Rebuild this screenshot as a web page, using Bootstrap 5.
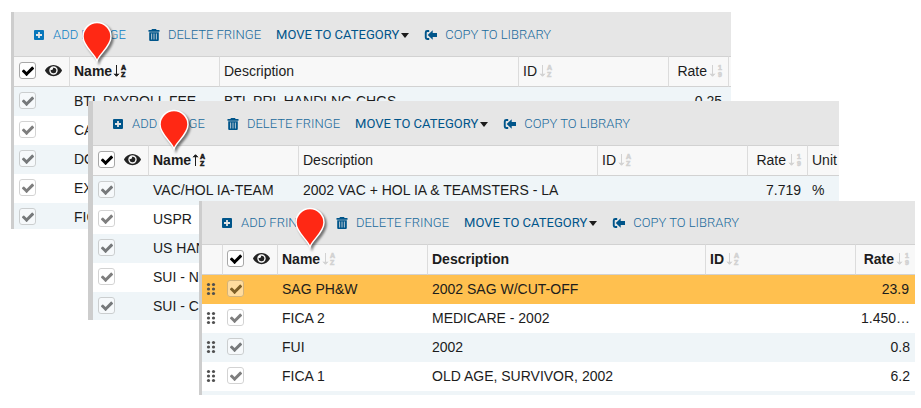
<!DOCTYPE html>
<html lang="en">
<head>
<meta charset="utf-8">
<meta name="viewport" content="width=device-width, initial-scale=1">
<title>Fringes</title>
<link rel="stylesheet" href="https://cdn.jsdelivr.net/npm/bootstrap@5.3.0/dist/css/bootstrap.min.css">
<style>
body{background:#fff;color:#1c1c1c;font:14px/20px "Liberation Sans",Arial,sans-serif;min-height:408px}
.win{background:#fff;border-left:3px solid #cdcdcd}
.win-a{left:11px;right:190px;top:12px;max-height:217px}
.win-b{left:88px;right:82px;top:101px;max-height:219px;border-left-width:5px}
.win-c{left:199px;right:6px;top:201px;max-height:194px}
.tools{height:44px;padding:2px 0 0 18px;background:#e6e6e6}
.win-c .tools{height:43px;padding-top:1px}
.tools .btn{--bs-btn-color:#1a6a9c;--bs-btn-hover-color:#00558a;font:300 13px/20px Roboto,sans-serif;border:0;gap:7px;margin-right:15px}
.tools .btn.add{margin-right:21px}
.tools .btn.move{--bs-btn-color:#00558a;font-weight:400;gap:2px}
.win-a .btn.add{--bs-btn-color:#0d80c4}
.move::after{content:"";border:4px solid transparent;border-top:5px solid #1c1c1c;border-bottom:0}
.glyph{width:14px;height:14px;fill:#00558a;flex:none}
.win-a .add .glyph{fill:#0877bb}
.grid{table-layout:fixed;width:100%;border-collapse:separate;border-spacing:0}
.grid th,.grid td{padding:0 5px 2px;white-space:nowrap}
.grid td{height:29px;overflow:hidden;text-overflow:ellipsis}
.grid th{height:31px;background:#f8f8f8;border-top:1px solid #d2d2d2;border-bottom:1px solid #d2d2d2;font-weight:400}
.grid th+th{border-left:1px solid #dcdcdc;padding-left:4px}
.grid th.strong{font-weight:700}
.stripe{background:#eff5f8}
.picked{background:#ffc04f}
.c-drag{width:20px}.c-check{width:55px}.c-name,.c-id{width:150px}.c-rate{width:60px}.c-edge{width:3px}.c-unit{width:32px}
.grid th.edge{padding:0}
.grid td.num{padding-right:6px}
.pick{gap:9px}
.tick.form-check-input{width:17px;height:17px;margin:0;border:1px solid #a8a8a8;border-radius:3px;background-color:#fff;float:none;flex:none;display:block}
.tick.form-check-input:checked{background-color:#fff;border-color:#a8a8a8;background-size:14px 14px;background-image:url("data:image/svg+xml,%3Csvg xmlns='http://www.w3.org/2000/svg' viewBox='0 0 1792 1792'%3E%3Cpath d='M1671 566q0 40-28 68l-724 724-136 136q-28 28-68 28t-68-28l-136-136-362-362q-28-28-28-68t28-68l136-136q28-28 68-28t68 28l294 295 656-657q28-28 68-28t68 28l136 136q28 28 28 68z'/%3E%3C/svg%3E")}
.grid td .tick.form-check-input{opacity:.5}
.grid td .tick.form-check-input:checked{background-color:rgba(255,255,255,.9)}
.eye{width:17px;height:15px;fill:#222}
.sort{width:14px;height:14px;margin-left:2px;fill:#d2d2d2;stroke:#d2d2d2}
.sort.on{margin-left:1px;fill:#1c1c1c;stroke:#1c1c1c}
.sort text{font:700 7px "Liberation Sans",Arial,sans-serif;stroke-width:.6}
.sort path{fill:none;stroke-width:1.7}
.dots{width:10px;height:14px;margin-left:-1px;fill:#505050;display:block}
.pin{width:38px;height:48px;filter:drop-shadow(2px 2px 1px rgba(0,0,0,.5))}
.win-a .pin{left:64px;top:6px}
.win-b .pin{left:62px;top:5px}
.win-c .pin{left:89px;top:3px}
</style>
<script src="https://cdn.jsdelivr.net/npm/bootstrap@5.3.0/dist/js/bootstrap.bundle.min.js"></script>
</head>
<body class="position-relative overflow-hidden">
<svg class="d-none" aria-hidden="true">
<symbol id="plus" viewBox="0 0 14 14"><path fill-rule="evenodd" d="M3 2h8a1 1 0 0 1 1 1v8a1 1 0 0 1-1 1H3a1 1 0 0 1-1-1V3a1 1 0 0 1 1-1zM6.1 4v2.1H4v1.8h2.1V10h1.8V7.900H10V6.100H7.900V4z"/></symbol>
<symbol id="trash" viewBox="0 0 14 14"><path fill-rule="evenodd" d="M5 1h4l.6 1H12.500v1.700h-11V2h2.900zM2.200 4.200h9.600V12a1 1 0 0 1-1 1H3.200a1 1 0 0 1-1-1zM4.300 5.500v6h.8v-6zM6.600 5.500v6h.8v-6zM8.900 5.500v6h.8v-6z"/></symbol>
<symbol id="export" viewBox="0 0 14 14"><path d="M5.200 2H3.200A2.400 2.400 0 0 0 .8 4.400v5.200A2.400 2.400 0 0 0 3.200 12h2v-1.900H3.500a.8.8 0 0 1-.8-.8V4.700a.8.8 0 0 1 .8-.8h1.700zM3.700 7l5-4.800v2.900H13v3.800H8.700v2.900z"/></symbol>
<symbol id="eye" viewBox="0 0 576 512"><path d="M572.520 241.400C518.290 135.590 410.930 64 288 64S57.680 135.640 3.480 241.410a32.350 32.350 0 0 0 0 29.190C57.710 376.410 165.070 448 288 448s230.320-71.640 284.520-177.410a32.350 32.350 0 0 0 0-29.190zM288 400a144 144 0 1 1 144-144 143.930 143.930 0 0 1-144 144zm0-240a95.310 95.310 0 0 0-25.180 3.790 47.850 47.850 0 0 1-66.900 66.900A95.780 95.780 0 1 0 288 160z"/></symbol>
<symbol id="down" viewBox="0 0 14 14"><path d="M3.500 1v11M1 9.800l2.500 2.500L6 9.800"/></symbol>
<symbol id="up" viewBox="0 0 14 14"><path d="M3.500 13V2M1 4.200l2.500-2.500L6 4.200"/></symbol>
<symbol id="dots" viewBox="0 0 10 14"><circle cx="2.500" cy="2.500" r="1.600"/><circle cx="7.500" cy="2.500" r="1.600"/><circle cx="2.500" cy="7" r="1.600"/><circle cx="7.500" cy="7" r="1.600"/><circle cx="2.500" cy="11.500" r="1.600"/><circle cx="7.500" cy="11.500" r="1.600"/></symbol>
<symbol id="pin" viewBox="0 0 38 48"><path d="M19 43C17 36 5 28.500 5 18.500a14 14 0 0 1 28 0C33 28.500 21 36 19 43z" fill="#ff2814" stroke="#fff" stroke-width="1.500"/></symbol>
</svg>

<section class="win win-a position-absolute overflow-hidden" aria-label="Sorted by name, ascending">
<div class="tools d-flex align-items-center text-nowrap">
<button type="button" class="btn add p-0 d-flex align-items-center"><svg class="glyph"><use href="#plus"/></svg>ADD FRINGE</button>
<button type="button" class="btn p-0 d-flex align-items-center"><svg class="glyph"><use href="#trash"/></svg>DELETE FRINGE</button>
<button type="button" class="btn move p-0 d-flex align-items-center">MOVE TO CATEGORY</button>
<button type="button" class="btn p-0 d-flex align-items-center"><svg class="glyph"><use href="#export"/></svg>COPY TO LIBRARY</button>
</div>
<table class="grid">
<colgroup><col class="c-check"><col class="c-name"><col><col class="c-id"><col class="c-rate"><col class="c-edge"></colgroup>
<thead><tr>
<th><div class="pick d-flex align-items-center"><input class="tick form-check-input" type="checkbox" checked aria-label="Select all"><svg class="eye"><use href="#eye"/></svg></div></th>
<th class="strong"><div class="d-flex align-items-center">Name<svg class="sort on"><use href="#down"/><text x="8" y="6">A</text><text x="8" y="13">Z</text></svg></div></th>
<th>Description</th>
<th><div class="d-flex align-items-center">ID<svg class="sort"><use href="#down"/><text x="8" y="6">A</text><text x="8" y="13">Z</text></svg></div></th>
<th><div class="d-flex align-items-center justify-content-end">Rate<svg class="sort"><use href="#down"/><text x="9" y="6">1</text><text x="9" y="13">9</text></svg></div></th>
<th class="edge"></th>
</tr></thead>
<tbody>
<tr class="stripe"><td><input class="tick form-check-input" type="checkbox" checked aria-label="Select BTL PAYROLL FEE"></td><td>BTL PAYROLL FEE</td><td>BTL PRL HANDLNG CHGS</td><td></td><td class="num text-end">0.25</td><td></td></tr>
<tr><td><input class="tick form-check-input" type="checkbox" checked aria-label="Select CA"></td><td>CA</td><td></td><td></td><td></td><td></td></tr>
<tr class="stripe"><td><input class="tick form-check-input" type="checkbox" checked aria-label="Select DO"></td><td>DO</td><td></td><td></td><td></td><td></td></tr>
<tr><td><input class="tick form-check-input" type="checkbox" checked aria-label="Select EX"></td><td>EX</td><td></td><td></td><td></td><td></td></tr>
<tr class="stripe"><td><input class="tick form-check-input" type="checkbox" checked aria-label="Select FIC"></td><td>FIC</td><td></td><td></td><td></td><td></td></tr>
</tbody></table>
<svg class="pin position-absolute"><use href="#pin"/></svg>
</section>

<section class="win win-b position-absolute overflow-hidden" aria-label="Sorted by name, descending">
<div class="tools d-flex align-items-center text-nowrap">
<button type="button" class="btn add p-0 d-flex align-items-center"><svg class="glyph"><use href="#plus"/></svg>ADD FRINGE</button>
<button type="button" class="btn p-0 d-flex align-items-center"><svg class="glyph"><use href="#trash"/></svg>DELETE FRINGE</button>
<button type="button" class="btn move p-0 d-flex align-items-center">MOVE TO CATEGORY</button>
<button type="button" class="btn p-0 d-flex align-items-center"><svg class="glyph"><use href="#export"/></svg>COPY TO LIBRARY</button>
</div>
<table class="grid">
<colgroup><col class="c-check"><col class="c-name"><col><col class="c-id"><col class="c-rate"><col class="c-unit"></colgroup>
<thead><tr>
<th><div class="pick d-flex align-items-center"><input class="tick form-check-input" type="checkbox" checked aria-label="Select all"><svg class="eye"><use href="#eye"/></svg></div></th>
<th class="strong"><div class="d-flex align-items-center">Name<svg class="sort on"><use href="#up"/><text x="8" y="6">A</text><text x="8" y="13">Z</text></svg></div></th>
<th>Description</th>
<th><div class="d-flex align-items-center">ID<svg class="sort"><use href="#down"/><text x="8" y="6">A</text><text x="8" y="13">Z</text></svg></div></th>
<th><div class="d-flex align-items-center justify-content-end">Rate<svg class="sort"><use href="#down"/><text x="9" y="6">1</text><text x="9" y="13">9</text></svg></div></th>
<th>Unit</th>
</tr></thead>
<tbody>
<tr class="stripe"><td><input class="tick form-check-input" type="checkbox" checked aria-label="Select VAC/HOL IA-TEAM"></td><td>VAC/HOL IA-TEAM</td><td>2002 VAC + HOL IA &amp; TEAMSTERS - LA</td><td></td><td class="num text-end">7.719</td><td>%</td></tr>
<tr><td><input class="tick form-check-input" type="checkbox" checked aria-label="Select USPR"></td><td>USPR</td><td></td><td></td><td></td><td></td></tr>
<tr class="stripe"><td><input class="tick form-check-input" type="checkbox" checked aria-label="Select US HAN"></td><td>US HAN</td><td></td><td></td><td></td><td></td></tr>
<tr><td><input class="tick form-check-input" type="checkbox" checked aria-label="Select SUI - N"></td><td>SUI - N</td><td></td><td></td><td></td><td></td></tr>
<tr class="stripe"><td><input class="tick form-check-input" type="checkbox" checked aria-label="Select SUI - C"></td><td>SUI - C</td><td></td><td></td><td></td><td></td></tr>
</tbody></table>
<svg class="pin position-absolute"><use href="#pin"/></svg>
</section>

<section class="win win-c position-absolute overflow-hidden" aria-label="Custom order">
<div class="tools d-flex align-items-center text-nowrap">
<button type="button" class="btn add p-0 d-flex align-items-center"><svg class="glyph"><use href="#plus"/></svg>ADD FRINGE</button>
<button type="button" class="btn p-0 d-flex align-items-center"><svg class="glyph"><use href="#trash"/></svg>DELETE FRINGE</button>
<button type="button" class="btn move p-0 d-flex align-items-center">MOVE TO CATEGORY</button>
<button type="button" class="btn p-0 d-flex align-items-center"><svg class="glyph"><use href="#export"/></svg>COPY TO LIBRARY</button>
</div>
<table class="grid">
<colgroup><col class="c-drag"><col class="c-check"><col class="c-name"><col><col class="c-id"><col class="c-rate"></colgroup>
<thead><tr>
<th></th>
<th><div class="pick d-flex align-items-center"><input class="tick form-check-input" type="checkbox" checked aria-label="Select all"><svg class="eye"><use href="#eye"/></svg></div></th>
<th class="strong"><div class="d-flex align-items-center">Name<svg class="sort"><use href="#down"/><text x="8" y="6">A</text><text x="8" y="13">Z</text></svg></div></th>
<th class="strong">Description</th>
<th class="strong"><div class="d-flex align-items-center">ID<svg class="sort"><use href="#down"/><text x="8" y="6">A</text><text x="8" y="13">Z</text></svg></div></th>
<th class="strong"><div class="d-flex align-items-center justify-content-end">Rate<svg class="sort"><use href="#down"/><text x="9" y="6">1</text><text x="9" y="13">9</text></svg></div></th>
</tr></thead>
<tbody>
<tr class="picked"><td><svg class="dots"><use href="#dots"/></svg></td><td><input class="tick form-check-input" type="checkbox" checked aria-label="Select SAG PH&amp;W"></td><td>SAG PH&amp;W</td><td>2002 SAG W/CUT-OFF</td><td></td><td class="num text-end">23.9</td></tr>
<tr><td><svg class="dots"><use href="#dots"/></svg></td><td><input class="tick form-check-input" type="checkbox" checked aria-label="Select FICA 2"></td><td>FICA 2</td><td>MEDICARE - 2002</td><td></td><td class="text-end">1.450…</td></tr>
<tr class="stripe"><td><svg class="dots"><use href="#dots"/></svg></td><td><input class="tick form-check-input" type="checkbox" checked aria-label="Select FUI"></td><td>FUI</td><td>2002</td><td></td><td class="text-end">0.8</td></tr>
<tr><td><svg class="dots"><use href="#dots"/></svg></td><td><input class="tick form-check-input" type="checkbox" checked aria-label="Select FICA 1"></td><td>FICA 1</td><td>OLD AGE, SURVIVOR, 2002</td><td></td><td class="text-end">6.2</td></tr>
<tr class="stripe"><td></td><td></td><td></td><td></td><td></td><td></td></tr>
</tbody></table>
<svg class="pin position-absolute"><use href="#pin"/></svg>
</section>
</body>
</html>
